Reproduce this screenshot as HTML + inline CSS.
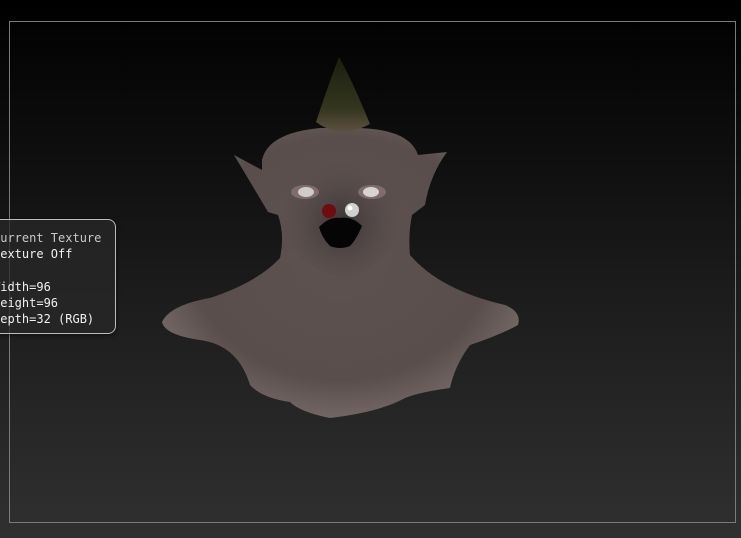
<!DOCTYPE html>
<html><head><style>
html,body{margin:0;padding:0;width:741px;height:538px;overflow:hidden;background:linear-gradient(#000 0%,#0a0a0a 20%,#1c1c1c 55%,#303030 100%);}
.frame{position:absolute;left:9px;top:21px;width:725px;height:500px;border:1px solid #7a7a7a;}
.tip{position:absolute;left:-10px;top:219px;width:124px;height:113px;border:1px solid #bdbdbd;border-radius:8px;background:rgba(40,40,40,0.75);box-shadow:0 1px 4px rgba(0,0,0,.6);}
.t{position:absolute;left:-7px;font-family:"DejaVu Sans Mono","Liberation Mono",monospace;font-size:12px;white-space:pre;color:#f0f0f0;line-height:16px;}
</style></head><body>
<div class="frame"></div>
<svg width="741" height="538" style="position:absolute;left:0;top:0">
<defs>
<radialGradient id="b" cx="50%" cy="45%" r="60%"><stop offset="0" stop-color="#5e5250"/><stop offset="0.7" stop-color="#5a4e4c"/><stop offset="1" stop-color="#7a706e"/></radialGradient>
<radialGradient id="f" cx="50%" cy="55%" r="55%"><stop offset="0" stop-color="#3a3232"/><stop offset="1" stop-color="#5a5050" stop-opacity="0"/></radialGradient>
<linearGradient id="h" x1="0" y1="0" x2="0" y2="1"><stop offset="0" stop-color="#1a1e0e"/><stop offset="0.7" stop-color="#34361e"/><stop offset="1" stop-color="#5e5040"/></linearGradient>
</defs>
<path d="M262,160 Q268,133 320,128 L360,128 Q410,130 418,155 L447,152 Q430,175 425,205 L412,215 Q408,235 410,255 Q440,290 505,305 Q522,312 518,325 Q500,335 470,345 Q455,365 450,388 Q420,392 405,398 Q380,412 330,418 Q300,412 290,402 Q262,398 250,385 Q238,345 200,340 Q165,335 162,322 Q170,305 210,298 Q258,282 280,258 Q285,235 278,215 L268,212 Q255,190 234,155 L262,170 Z" fill="url(#b)"/>
<path d="M282,175 Q300,158 340,156 Q385,158 402,178 L400,230 Q390,264 345,280 Q300,266 286,240 Z" fill="url(#f)"/>
<path d="M339,57 Q330,80 316,122 Q340,140 370,124 Q352,80 339,57 Z" fill="url(#h)"/>
<ellipse cx="305" cy="192" rx="14" ry="7" fill="#7e6c6e"/>
<ellipse cx="306" cy="192" rx="8" ry="5" fill="#d0cccc"/>
<ellipse cx="372" cy="192" rx="14" ry="7" fill="#7e6c6e"/>
<ellipse cx="371" cy="192" rx="8" ry="5" fill="#d8d4d4"/>
<path d="M319,227 Q330,216 340,218 Q352,216 362,226 Q356,240 350,246 Q340,250 330,246 Q322,238 319,227 Z" fill="#050505"/>
<circle cx="329" cy="211" r="7" fill="#6e0c0e"/>
<circle cx="352" cy="210" r="7" fill="#d0d0d0"/>
<circle cx="350" cy="208" r="2.5" fill="#fff"/>
</svg>
<div class="tip"></div>
<div class="t" style="top:230px;color:#c8c8c8">Current Texture</div>
<div class="t" style="top:246px">Texture Off</div>
<div class="t" style="top:279px">Width=96</div>
<div class="t" style="top:295px">Height=96</div>
<div class="t" style="top:311px">Depth=32 (RGB)</div>
</body></html>
